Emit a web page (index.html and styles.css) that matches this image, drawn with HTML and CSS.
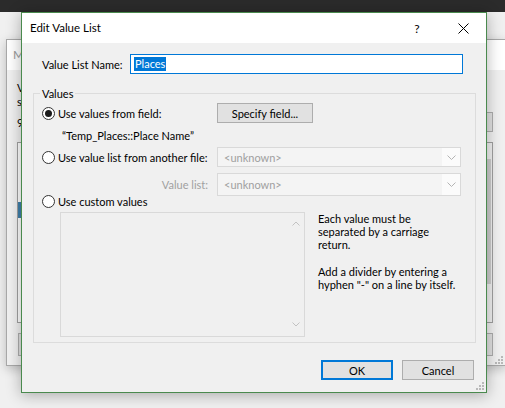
FILE: index.html
```html
<!DOCTYPE html>
<html>
<head>
<meta charset="utf-8">
<link rel="stylesheet" href="styles.css">
</head>
<body>
<div class="topbar"></div>

<div class="bgwin">
  <div class="bg-title">M</div>
  <div class="bg-body">
    <div class="bg-text">V<br>s</div>
    <div class="bg-row"><span>9</span><span class="bg-btn"></span></div>
    <div class="bg-list">
      <div class="bg-list-main"><div class="bg-sel"></div></div>
      <div class="bg-scroll"><div class="bg-thumb"></div></div>
    </div>
    <div class="bg-btnrow"><span class="bg-btn"></span><span class="bg-btn"></span></div>
  </div>
  <svg class="grip bg-grip" width="8" height="8" viewBox="0 0 8 8"><rect x="6" y="0" width="2" height="2"/><rect x="3" y="3" width="2" height="2"/><rect x="6" y="3" width="2" height="2"/><rect x="0" y="6" width="2" height="2"/><rect x="3" y="6" width="2" height="2"/><rect x="6" y="6" width="2" height="2"/></svg>
</div>

<div class="dialog">
  <div class="titlebar">
    <span class="title">Edit Value List</span>
    <span class="tb-btn">?</span>
    <span class="tb-btn"><svg width="11" height="11" viewBox="0 0 11 11"><path d="M0.5 0.5 L10.5 10.5 M10.5 0.5 L0.5 10.5" stroke="#000" stroke-width="1" fill="none"/></svg></span>
  </div>
  <div class="dlg-body">
    <div class="name-row">
      <label class="name-label">Value List Name:</label>
      <div class="input"><span class="sel">Places</span></div>
    </div>

    <div class="group">
      <span class="legend">Values</span>
      <div class="row r1">
        <span class="rlabel"><span class="radio on"></span>Use values from field:</span>
        <span class="btn specify">Specify field...</span>
      </div>
      <div class="row temp">“Temp_Places::Place Name”</div>
      <div class="row r2">
        <span class="rlabel"><span class="radio"></span>Use value list from another file:</span>
        <span class="combo"><span class="combo-text">&lt;unknown&gt;</span><span class="combo-arrow"><svg width="9" height="5" viewBox="0 0 9 5"><path d="M0.5 0.5 L4.5 4.5 L8.5 0.5" stroke="#b4b4b4" fill="none"/></svg></span></span>
      </div>
      <div class="row r3">
        <span class="vl-label">Value list:</span>
        <span class="combo"><span class="combo-text">&lt;unknown&gt;</span><span class="combo-arrow"><svg width="9" height="5" viewBox="0 0 9 5"><path d="M0.5 0.5 L4.5 4.5 L8.5 0.5" stroke="#b4b4b4" fill="none"/></svg></span></span>
      </div>
      <div class="row r4">
        <span class="rlabel"><span class="radio"></span>Use custom values</span>
      </div>
      <div class="row r5">
        <div class="textarea">
          <div class="ta-scroll">
            <svg width="8" height="5" viewBox="0 0 8 5"><path d="M0.5 4.5 L4 1 L7.5 4.5" stroke="#c2c2c2" fill="none"/></svg>
            <svg width="8" height="5" viewBox="0 0 8 5"><path d="M0.5 0.5 L4 4 L7.5 0.5" stroke="#c2c2c2" fill="none"/></svg>
          </div>
        </div>
        <div class="help">
          <p>Each value must be<br>separated by a carriage<br>return.</p>
          <p class="p2">Add a divider by entering a<br>hyphen &quot;-&quot; on a line by itself.</p>
        </div>
      </div>
    </div>

    <div class="footer">
      <span class="btn ok">OK</span>
      <span class="btn cancel">Cancel</span>
    </div>
  </div>
  <svg class="grip dlg-grip" width="8" height="8" viewBox="0 0 8 8"><rect x="6" y="0" width="2" height="2"/><rect x="3" y="3" width="2" height="2"/><rect x="6" y="3" width="2" height="2"/><rect x="0" y="6" width="2" height="2"/><rect x="3" y="6" width="2" height="2"/><rect x="6" y="6" width="2" height="2"/></svg>
</div>
</body>
</html>
```

FILE: styles.css
```css
html, body {
  margin: 0;
  padding: 0;
}
body {
  width: 505px;
  height: 408px;
  overflow: hidden;
  position: relative;
  background: #f0f0f0;
  font-family: Lato, "Open Sans", sans-serif;
  font-size: 11px;
  color: #000;
}
p { margin: 0; }

.topbar {
  height: 12px;
  background: #2b2b2b;
}

/* background window (mostly hidden behind the dialog) */
.bgwin {
  position: absolute;
  left: 6px;
  top: 39px;
  width: 500px;
  height: 327px;
  box-sizing: border-box;
  border: 1px solid #a8a8a8;
  background: #f0f0f0;
  box-shadow: 0 3px 10px rgba(0,0,0,0.22);
  display: flex;
  flex-direction: column;
}
.bg-title {
  height: 30px;
  line-height: 30px;
  background: #fff;
  color: #9a9a9a;
  padding-left: 6px;
  font-size: 12px;
}
.bg-body {
  padding: 0 12px 0 10px;
  display: flex;
  flex-direction: column;
}
.bg-text {
  margin-top: 11px;
  line-height: 14px;
}
.bg-row {
  margin-top: 3px;
  height: 20px;
  display: flex;
  justify-content: space-between;
  align-items: center;
}
.bg-btn {
  box-sizing: border-box;
  height: 100%;
  width: 80px;
  border: 1px solid #adadad;
  background: #e1e1e1;
}
.bg-list {
  margin-top: 10px;
  height: 181px;
  box-sizing: border-box;
  border: 1px solid #a0a0a0;
  background: #fff;
  display: flex;
}
.bg-list-main { flex: 1; }
.bg-sel {
  margin-top: 59px;
  height: 16px;
  background: #3f81ab;
}
.bg-scroll {
  width: 16px;
  background: #f0f0f0;
}
.bg-thumb {
  margin: 16px 1px 0 2px;
  height: 125px;
  background: #cdcdcd;
}
.bg-btnrow {
  margin-top: 10px;
  height: 23px;
  padding-left: 1px;
  display: flex;
  justify-content: space-between;
}

.grip { position: absolute; fill: #b9b9b9; }
.bg-grip { right: 2px; bottom: 1px; }
.dlg-grip { right: 2px; bottom: 2px; }

/* dialog */
.dialog {
  position: absolute;
  left: 21px;
  top: 12px;
  width: 466px;
  height: 381px;
  box-sizing: border-box;
  border: 1px solid #4a8a4e;
  background: #f0f0f0;
  box-shadow: 0 2px 14px rgba(0,0,0,0.3);
  display: flex;
  flex-direction: column;
}
.titlebar {
  height: 30px;
  background: #fff;
  display: flex;
}
.title {
  flex: 1;
  padding-left: 8px;
  line-height: 30px;
  font-size: 11.5px;
}
.tb-btn {
  width: 46px;
  display: flex;
  align-items: center;
  justify-content: center;
  font-size: 12px;
}
.dlg-body {
  flex: 1;
  display: flex;
  flex-direction: column;
}
.name-row {
  margin: 11px 0 0 20px;
  height: 20px;
  display: flex;
  align-items: center;
}
.name-label { width: 88px; }
.input {
  width: 333px;
  height: 20px;
  box-sizing: border-box;
  border: 1px solid #0078d7;
  background: #fff;
  display: flex;
  align-items: center;
  padding-left: 3px;
}
.sel {
  background: #0078d7;
  color: #fff;
  line-height: 14px;
  padding: 0 1px;
}

.group {
  margin: 19px 0 0 11px;
  width: 443px;
  height: 250px;
  box-sizing: border-box;
  border: 1px solid #dcdcdc;
  padding-left: 8px;
  display: flex;
  flex-direction: column;
}
.legend {
  align-self: flex-start;
  margin: -8px 0 0 -2px;
  height: 16px;
  line-height: 16px;
  padding: 0 2px;
  background: #f0f0f0;
}
.row {
  display: flex;
  align-items: center;
  white-space: nowrap;
}
.rlabel {
  width: 175px;
  display: flex;
  align-items: center;
  gap: 3px;
}
.radio {
  width: 13px;
  height: 13px;
  box-sizing: border-box;
  border: 1px solid #333;
  border-radius: 50%;
  background: #fff;
  flex: none;
  display: flex;
  align-items: center;
  justify-content: center;
}
.radio.on::after {
  content: "";
  width: 7px;
  height: 7px;
  border-radius: 50%;
  background: #1a1a1a;
}
.btn {
  box-sizing: border-box;
  height: 20px;
  border: 1px solid #adadad;
  background: #e1e1e1;
  display: flex;
  align-items: center;
  justify-content: center;
}
.specify { width: 96px; }
.r1 { margin-top: 1px; height: 20px; }
.temp { margin-top: 4px; height: 16px; padding-left: 20px; }
.r2 { margin-top: 4px; height: 20px; }
.r3 { margin-top: 6px; height: 23px; }
.r4 { margin-top: -2px; height: 14px; }
.r5 { margin-top: 4px; align-items: flex-start; }
.vl-label {
  width: 175px;
  box-sizing: border-box;
  padding-right: 9px;
  text-align: right;
  color: #a0a0a0;
}
.combo {
  width: 244px;
  height: 100%;
  box-sizing: border-box;
  border: 1px solid #d9d9d9;
  background: #f4f4f4;
  color: #a0a0a0;
  display: flex;
}
.combo-text {
  flex: 1;
  padding-left: 6px;
  display: flex;
  align-items: center;
}
.combo-arrow {
  width: 18px;
  background: #fbfbfb;
  display: flex;
  align-items: center;
  justify-content: center;
}
.textarea {
  margin-left: 18px;
  width: 245px;
  height: 125px;
  box-sizing: border-box;
  border: 1px solid #d9d9d9;
  display: flex;
  justify-content: flex-end;
}
.ta-scroll {
  width: 17px;
  padding: 8px 0 9px;
  display: flex;
  flex-direction: column;
  justify-content: space-between;
  align-items: center;
}
.help {
  margin-left: 13px;
  line-height: 13px;
  white-space: nowrap;
}
.help .p2 { margin-top: 14px; }

.footer {
  margin-top: 17px;
  height: 20px;
  padding-right: 12px;
  display: flex;
  justify-content: flex-end;
  gap: 9px;
}
.ok, .cancel { width: 72px; }
.ok { border: 2px solid #0078d7; }
```
